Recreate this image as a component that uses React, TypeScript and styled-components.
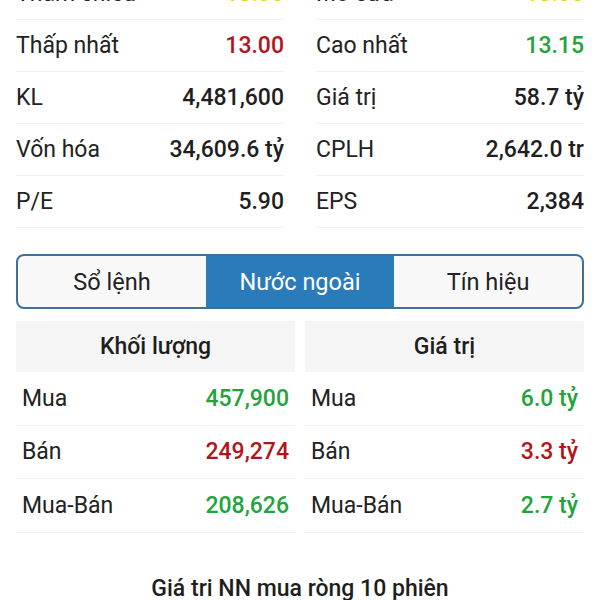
import React from "react";
import styled, { createGlobalStyle } from "styled-components";

const GlobalStyle = createGlobalStyle`
  html, body {
    margin: 0;
    padding: 0;
    background: #ffffff;
  }
  body {
    font-family: Roboto, "Noto Sans", "DejaVu Sans", sans-serif;
    color: #222222;
    overflow: hidden;
  }
`;

type Tone = "up" | "down" | "ref" | "plain";

const toneColor: Record<Tone, string> = {
  up: "#22a33c",
  down: "#b3141c",
  ref: "#e8d21c",
  plain: "#1f1f1f",
};

interface Stat {
  label: string;
  value: string;
  tone?: Tone;
}

const leftStats: Stat[] = [
  { label: "Tham chiếu", value: "13.05", tone: "ref" },
  { label: "Thấp nhất", value: "13.00", tone: "down" },
  { label: "KL", value: "4,481,600" },
  { label: "Vốn hóa", value: "34,609.6 tỷ" },
  { label: "P/E", value: "5.90" },
];

const rightStats: Stat[] = [
  { label: "Mở cửa", value: "13.05", tone: "ref" },
  { label: "Cao nhất", value: "13.15", tone: "up" },
  { label: "Giá trị", value: "58.7 tỷ" },
  { label: "CPLH", value: "2,642.0 tr" },
  { label: "EPS", value: "2,384" },
];

const volumeRows: Stat[] = [
  { label: "Mua", value: "457,900", tone: "up" },
  { label: "Bán", value: "249,274", tone: "down" },
  { label: "Mua-Bán", value: "208,626", tone: "up" },
];

const valueRows: Stat[] = [
  { label: "Mua", value: "6.0 tỷ", tone: "up" },
  { label: "Bán", value: "3.3 tỷ", tone: "down" },
  { label: "Mua-Bán", value: "2.7 tỷ", tone: "up" },
];

const tabs = ["Sổ lệnh", "Nước ngoài", "Tín hiệu"];

const Page = styled.div`
  padding: 0 16px;
`;

const StatsGrid = styled.div`
  display: grid;
  grid-template-columns: 1fr 1fr;
  column-gap: 32px;
  margin-top: -32px;
`;

const StatColumn = styled.div`
  display: flex;
  flex-direction: column;
`;

const StatRow = styled.div`
  display: flex;
  align-items: center;
  justify-content: space-between;
  height: 51px;
  border-bottom: 1.5px solid #f1f1f1;
  font-size: 23px;
`;

const Label = styled.span`
  color: #222222;
`;

const Value = styled.span<{ $tone: Tone }>`
  font-weight: 500;
  color: ${(p) => toneColor[p.$tone]};
`;

const TabBar = styled.div`
  display: grid;
  grid-template-columns: 1fr 1fr 1fr;
  height: 51px;
  margin-top: 26px;
  border: 2px solid #3d6f9b;
  border-radius: 8px;
  overflow: hidden;
  background: #f8f8f8;
`;

const Tab = styled.div<{ $active?: boolean }>`
  display: flex;
  align-items: center;
  justify-content: center;
  font-size: 23.5px;
  color: ${(p) => (p.$active ? "#ffffff" : "#222222")};
  background: ${(p) => (p.$active ? "#2a7bb9" : "transparent")};
`;

const ForeignGrid = styled.div`
  display: grid;
  grid-template-columns: 1fr 1fr;
  column-gap: 10px;
  margin-top: 12px;
`;

const ForeignColumn = styled.div`
  display: flex;
  flex-direction: column;
`;

const ColumnHeader = styled.div`
  display: flex;
  align-items: center;
  justify-content: center;
  height: 51px;
  background: #f5f5f5;
  font-size: 23px;
  font-weight: 500;
  color: #1e1e1e;
`;

const ForeignRow = styled(StatRow)`
  height: 52.5px;
  padding: 0 6px;
`;

const ChartTitle = styled.div`
  margin-top: 42px;
  text-align: center;
  font-size: 23px;
  font-weight: 500;
  color: #1e1e1e;
`;

const StatList: React.FC<{ items: Stat[] }> = ({ items }) => (
  <StatColumn>
    {items.map((s) => (
      <StatRow key={s.label}>
        <Label>{s.label}</Label>
        <Value $tone={s.tone ?? "plain"}>{s.value}</Value>
      </StatRow>
    ))}
  </StatColumn>
);

const ForeignTable: React.FC<{ title: string; items: Stat[] }> = ({ title, items }) => (
  <ForeignColumn>
    <ColumnHeader>{title}</ColumnHeader>
    {items.map((s) => (
      <ForeignRow key={s.label}>
        <Label>{s.label}</Label>
        <Value $tone={s.tone ?? "plain"}>{s.value}</Value>
      </ForeignRow>
    ))}
  </ForeignColumn>
);

export default function App() {
  return (
    <>
      <GlobalStyle />
      <Page>
        <StatsGrid>
          <StatList items={leftStats} />
          <StatList items={rightStats} />
        </StatsGrid>

        <TabBar>
          {tabs.map((t) => (
            <Tab key={t} $active={t === "Nước ngoài"}>
              {t}
            </Tab>
          ))}
        </TabBar>

        <ForeignGrid>
          <ForeignTable title="Khối lượng" items={volumeRows} />
          <ForeignTable title="Giá trị" items={valueRows} />
        </ForeignGrid>

        <ChartTitle>Giá tri NN mua ròng 10 phiên</ChartTitle>
      </Page>
    </>
  );
}
